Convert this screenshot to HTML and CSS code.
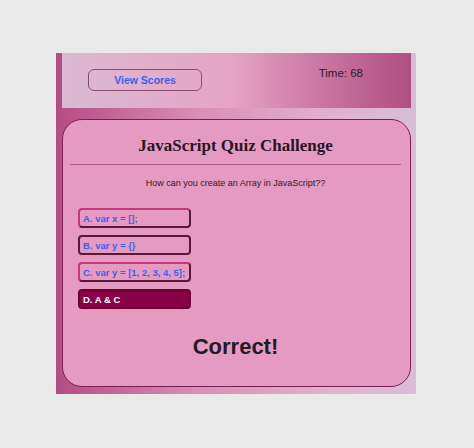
FILE: index.html
```html
<!DOCTYPE html>
<html lang="en">
<head>
  <meta charset="UTF-8" />
  <meta name="viewport" content="width=device-width, initial-scale=1.0"/>
  <title>JavaScript Quiz Challenge</title>
  <link rel="stylesheet" href="styles.css">
</head>
<body>
  <div class="app">
    <div class="top-bar">
      <button class="btn-scores">View Scores</button>
      <div class="timer">Time: <span id="time">68</span></div>
    </div>

    <div class="quiz-card">
      <h1>JavaScript Quiz Challenge</h1>
      <hr>
      <p class="question">How can you create an Array in JavaScript??</p>

      <div class="answers">
        <button class="answer">A. var x = [];</button>
        <button class="answer dark">B. var y = {}</button>
        <button class="answer">C. var y = [1, 2, 3, 4, 5];</button>
        <button class="answer selected">D. A &amp; C</button>
      </div>

      <div class="result">Correct!</div>
    </div>
  </div>
</body>
</html>
```

FILE: styles.css
```css
* { margin:0; padding:0; box-sizing:border-box; font-family:"Liberation Sans",Arial,sans-serif; }
body {
  background:#e9e9e9;
  padding:53px 0 0 56px;
}
.app {
  width:360px;
  padding:0 5px 7px 6px;
  background:linear-gradient(to right, #b44c84 0%, #d98fb5 40%, #e2b0cc 75%, #d9bdd6 100%);
}
.top-bar {
  height:55px;
  display:flex;
  align-items:flex-start;
  padding:14px 48px 0 26px;
  background:linear-gradient(to right, #dab9d2 0%, #e6a4c4 48%, #cc7aa4 72%, #b04e80 100%);
}
.btn-scores {
  margin-top:2px;
  width:114px; height:22px;
  background:transparent;
  border:1px solid #8c4a6e;
  border-radius:6px;
  color:#3b5ef2;
  font-weight:bold;
  font-size:10.5px;
}
.timer {
  margin-left:auto;
  font-size:11.5px;
  color:#2a1a26;
}
.quiz-card {
  margin-top:11px;
  height:268px;
  background:#e59bc1;
  border:1px solid #7a1f4f;
  border-radius:20px;
  padding:15px 9px 0 7px;
}
.quiz-card h1 {
  font-family:"Liberation Serif","Times New Roman",serif;
  font-size:17px;
  font-weight:bold;
  text-align:center;
  color:#2a1424;
  line-height:22px;
}
.quiz-card hr {
  margin-top:7px;
  border:none;
  border-top:1px solid #a85a82;
}
.question {
  margin-top:13px;
  text-align:center;
  font-size:9px;
  color:#2e1a28;
}
.answers {
  margin:20px 0 0 8px;
  display:flex;
  flex-direction:column;
  gap:7px;
}
.answer {
  width:113px; height:20px;
  text-align:left;
  padding:0 3px;
  white-space:nowrap;
  background:transparent;
  border:2px solid #c8357a;
  border-right-color:#5a1838;
  border-bottom-color:#5a1838;
  border-radius:4px;
  color:#3b5ef2;
  font-weight:bold;
  font-size:9.5px;
}
.answer.dark { border-color:#5a1838; }
.answer.selected {
  background:#8a0048;
  border-color:#6a0036;
  color:#fff;
}
.result {
  margin-top:25px;
  text-align:center;
  font-size:22px;
  font-weight:bold;
  color:#231a22;
}
```
